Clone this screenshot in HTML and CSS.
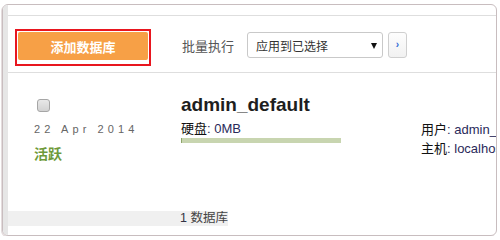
FILE: index.html
```html
<!DOCTYPE html>
<html lang="zh">
<head>
<meta charset="utf-8">
<title>数据库</title>
<link rel="stylesheet" href="styles.css">
</head>
<body>
<div class="frame">
  <div class="strip"></div>
  <div class="main">
    <div class="toolbar">
      <div class="highlight">
        <button class="add-btn">添加数据库</button>
      </div>
      <div class="bulk">
        <span class="bulk-label">批量执行</span>
        <div class="select">
          <span>应用到已选择</span>
          <span class="caret"></span>
        </div>
        <button class="go-btn">›</button>
      </div>
    </div>
    <div class="row">
      <div class="col-left">
        <input type="checkbox" class="check">
        <div class="date">22 Apr 2014</div>
        <div class="status">活跃</div>
      </div>
      <div class="col-mid">
        <div class="title">admin_default</div>
        <div class="disk"><span class="lbl">硬盘</span><span class="val">: 0MB</span></div>
        <div class="bar"><div class="bar-fill"></div></div>
      </div>
      <div class="col-right">
        <div class="info"><span class="lbl">用户</span><span class="val">: admin_user</span></div>
        <div class="info"><span class="lbl">主机</span><span class="val">: localhost</span></div>
      </div>
    </div>
    <div class="footer"><span class="count">1</span> 数据库</div>
  </div>
</div>
</body>
</html>
```

FILE: styles.css
```css
* { box-sizing: border-box; }
html, body { margin: 0; padding: 0; background: #fff; }
body { font-family: "Liberation Sans", "Noto Sans CJK SC", sans-serif; color: #222; }

.frame {
  margin: 4px 0 0 2px;
  width: 495px;
  height: 232px;
  border: 1px solid #c8bdbf;
  border-radius: 6px;
  overflow: hidden;
  display: flex;
  box-shadow: -1px 1px 0 #e4dcdd;
}
.strip { width: 5px; flex: none; background: #e6e6e6; }
.main { flex: 1; min-width: 0; padding-top: 10px; display: flex; flex-direction: column; }

.toolbar {
  height: 58px;
  border-top: 1px solid #dedede;
  border-bottom: 1px solid #dedede;
  display: flex;
  align-items: flex-start;
  padding: 13px 0 0 7px;
}
.highlight {
  border: 2px solid #e8161f;
  padding: 1px 1px 4px 1px;
}
.add-btn {
  display: block;
  width: 130px;
  height: 28px;
  border: none;
  border-radius: 2px;
  background: #f7a046;
  color: #fff;
  font: bold 13px "Liberation Sans", "Noto Sans CJK SC", sans-serif;
  padding: 0;
}
.bulk { display: flex; align-items: center; height: 26px; margin: 3px 0 0 31px; }
.bulk-label { font-size: 13px; color: #555; margin-right: 13px; }
.select {
  width: 136px; height: 26px;
  border: 1px solid #c9c9c9; border-radius: 3px;
  display: flex; align-items: center; justify-content: space-between;
  padding: 0 5px 0 8px;
  font-size: 12px; color: #333; background: #fff;
}
.caret {
  width: 0; height: 0;
  border-left: 3.5px solid transparent;
  border-right: 3.5px solid transparent;
  border-top: 6px solid #111;
  margin-top: 1px;
}
.go-btn {
  width: 19px; height: 26px; margin-left: 5px; padding: 0 0 2px 0;
  border: 1px solid #cfcfcf; border-radius: 3px;
  background: linear-gradient(#fdfdfd, #f1f1f1);
  color: #2f6bd6; font: bold 10px "Liberation Sans", sans-serif;
}

.row { height: 138px; display: flex; padding-left: 26px; flex: none; }
.col-left { width: 147px; flex: none; padding-top: 26px; }
.check {
  -webkit-appearance: none; appearance: none;
  display: block; margin: 0 0 10px 3px;
  width: 13px; height: 13px;
  border: 1px solid #a6a6a6; border-radius: 3px;
  background: linear-gradient(#e8e8e8, #d2d2d2);
}
.date { font-size: 11px; line-height: 14px; letter-spacing: 4.1px; color: #666; white-space: nowrap; }
.status { margin-top: 9px; font-size: 14px; line-height: 18px; font-weight: bold; color: #6e9a3a; }

.col-mid { width: 240px; flex: none; padding-top: 21px; }
.title { font-size: 19px; line-height: 22px; font-weight: bold; color: #1e1e1e; }
.disk { margin-top: 5px; font-size: 13px; line-height: 16px; }
.lbl { color: #111; }
.val { color: #2a2a5a; }
.bar { margin-top: 1px; width: 160px; height: 5px; background: #c8d5b0; }
.bar-fill { width: 1px; height: 5px; background: #8ea56a; }

.col-right { flex: none; padding-top: 47px; white-space: nowrap; }
.info { font-size: 13px; line-height: 19px; }

.footer {
  width: 220px; height: 15px;
  background: #f0f0f0;
  text-align: right;
  font-size: 12.5px; line-height: 15px; color: #444;
}
.count { color: #334; }
```
